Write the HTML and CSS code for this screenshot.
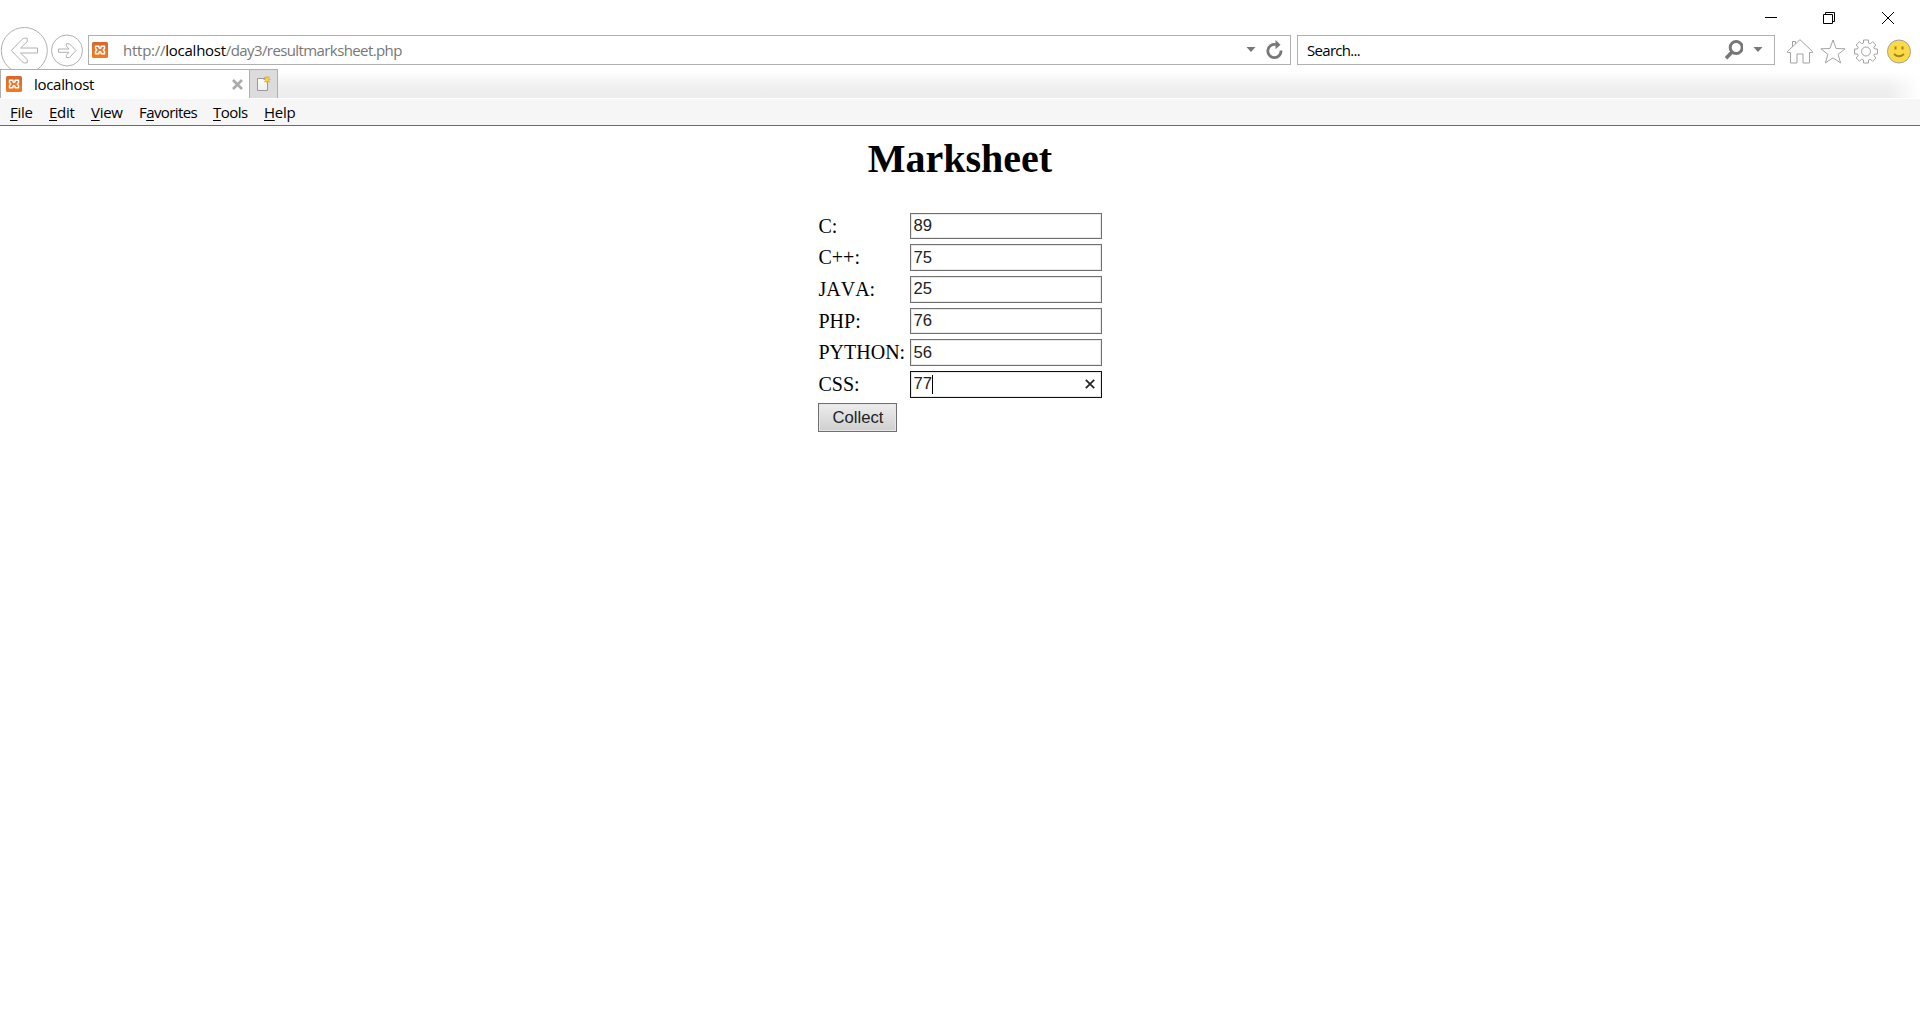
FILE: index.html
```html
<!DOCTYPE html>
<html lang="en">
<head>
<meta charset="utf-8">
<title>localhost</title>
<link rel="stylesheet" href="styles.css">
</head>
<body>
<svg class="defs" width="0" height="0">
  <defs>
    <linearGradient id="orange" x1="0" y1="0" x2="0" y2="1"><stop offset="0" stop-color="#d9662a"/><stop offset="1" stop-color="#f47b22"/></linearGradient>
    <symbol id="xampp" viewBox="0 0 16 16">
      <rect width="16" height="16" rx="1.5" fill="url(#orange)"/>
      <path d="M6.900 5.800V4.300H3.500V6.600L4.800 8L3.500 9.400V11.700H6.900V10.200M9.100 5.800V4.300H12.500V6.600L11.200 8L12.500 9.400V11.700H9.100V10.200M6.900 5.800Q8 7.200 9.100 5.800M6.900 10.200Q8 8.800 9.100 10.200" fill="none" stroke="#fff" stroke-width="1.500" stroke-linejoin="round"/>
    </symbol>
  </defs>
</svg>
<header class="chrome">
  <div class="titlebar">
    <svg width="12" height="12"><path d="M0 5.500h12" stroke="#000"/></svg>
    <svg width="12" height="12" fill="none" stroke="#000"><path d="M.5 2.500h9v9h-9zM2.500 2.500v-2h9v9h-2"/></svg>
    <svg width="12" height="12" stroke="#000"><path d="M0 0l12 12M12 0L0 12"/></svg>
  </div>
  <div class="navbar">
    <svg class="back" width="50" height="50" fill="none" stroke="#b0b0b0"><circle cx="24.300" cy="23.500" r="23"/><path d="M11.300 23.500L22 12.500q1.300-1.300 2.600-1.300h2.600v3.400L20.500 21H37.500v5H20.500l6.700 6.500v3.400h-2.600q-1.300 0-2.600-1.300Z"/></svg>
    <svg class="forward" width="34" height="34" fill="none" stroke="#b0b0b0"><circle cx="17" cy="16.500" r="15.500"/><path d="M26 16.500L19.500 9.800H16.300V12L19 15H8.500v3.300H19L16.300 21.300v2.300h3.200Z"/></svg>
    <div class="address">
      <svg class="favicon" width="16" height="16"><use href="#xampp"/></svg>
      <span class="url">http://<b>localhost</b><span class="path">/day3/resultmarksheet.php</span></span>
      <svg class="caret" width="10" height="6"><path d="M.5 0h9L5 5z" fill="#777"/></svg>
      <svg width="18" height="20" fill="none"><path d="M9.800 4.600A6.600 6.600 0 1 0 15 10.500" stroke="#777" stroke-width="2.800"/><path d="M9.500 0l5 4.700L9.500 9.200z" fill="#777"/></svg>
    </div>
    <div class="search">
      <span>Search...</span>
      <svg width="18" height="20" fill="none" stroke="#777"><circle cx="11.200" cy="7.500" r="6" stroke-width="3"/><path d="M7 12l-6 6.200" stroke-width="3.600"/></svg>
      <svg width="10" height="6"><path d="M.5 0h9L5 5z" fill="#777"/></svg>
    </div>
    <div class="tools">
      <svg width="26" height="25" fill="none" stroke="#a2a2a2"><path d="M.6 12.400L13 .7 25.400 12.400v1.100H22.500v10.500H16v-9H10v9H3.500V13.500H.6zM5.500 7.800V2.500h3v2.400"/></svg>
      <svg width="26" height="25" fill="none" stroke="#a2a2a2"><path d="M13 1l3.100 8.500 9 .3-7 5.600 2.500 8.500L13 18.900 5.400 23.900l2.500-8.500-7-5.600 9-.3z"/></svg>
      <svg width="26" height="25" fill="none" stroke="#a2a2a2"><circle cx="13" cy="12.500" r="4.500"/><path d="M10.500 4V1h5v3l1.900.8L19.500 2.700 23 6.100l-2.200 2.100.8 1.800H24.500v5h-2.900l-.8 1.800L23 18.900l-3.500 3.400-2.100-2.100-1.900.8V24h-5v-3l-1.900-.8-2.100 2.100L3 18.900l2.200-2.100L4.400 15H1.500v-5h2.900l.8-1.800L3 6.100l3.500-3.400 2.100 2.100z"/></svg>
      <svg width="26" height="25" fill="none"><circle cx="13" cy="12.500" r="11.500" fill="#fdd943" stroke="#a0a0a0"/><path d="M9.500 7.500v3M16.500 7.500v3" stroke="#9b8429" stroke-width="2"/><path d="M8 15q5 4.500 10 0" stroke="#9b8429" stroke-width="1.800"/></svg>
    </div>
  </div>
  <div class="tabs">
    <div class="tab">
      <svg class="favicon" width="16" height="16"><use href="#xampp"/></svg>
      <span>localhost</span>
      <svg width="11" height="11"><path d="M1 1l9 9M10 1L1 10" stroke="#aaa" stroke-width="2.600"/></svg>
    </div>
    <div class="newtab">
      <svg width="16" height="17"><defs><linearGradient id="page" x2="0" y2="1"><stop stop-color="#fff"/><stop offset="1" stop-color="#eee"/></linearGradient></defs><path d="M1.500 3.500h10v12h-10z" fill="url(#page)" stroke="#999"/><path d="M11 1v7M7.500 4.500h7M8.500 2l5 5M13.500 2l-5 5" stroke="#eda52d" stroke-width="1.200"/><circle cx="11" cy="4.500" r="1.800" fill="#ffd04d"/></svg>
    </div>
    <div class="tabspace"></div>
  </div>
  <nav class="menu">
    <span class="file"><u>F</u>ile</span><span class="edit"><u>E</u>dit</span><span class="view"><u>V</u>iew</span><span class="favorites">F<u>a</u>vorites</span><span class="toolsmenu"><u>T</u>ools</span><span><u>H</u>elp</span>
  </nav>
</header>
<main>
  <h1>Marksheet</h1>
  <form class="marks">
    <label>C:</label><div class="field">89</div>
    <label>C++:</label><div class="field">75</div>
    <label class="java">JAVA:</label><div class="field">25</div>
    <label>PHP:</label><div class="field">76</div>
    <label>PYTHON:</label><div class="field">56</div>
    <label>CSS:</label><div class="field focused">77<i class="cursor"></i><svg width="10" height="10"><path d="M.8.8l8.400 8.400M9.200.8L.8 9.200" stroke="#222" stroke-width="1.700"/></svg></div>
    <button type="button">Collect</button>
  </form>
</main>
</body>
</html>
```
FILE: styles.css
```css
* { box-sizing: border-box; }
body { margin: 0; background: #fff; color: #000; font: 20px "Liberation Serif", serif; overflow: hidden; }
svg { display: block; flex: none; }
.defs { position: absolute; }
.chrome { height: 126px; font: 15px/20px "Open Sans", sans-serif; border-bottom: 1px solid #6b6b6b; }
.titlebar { height: 27px; display: flex; justify-content: flex-end; gap: 46px; padding: 12px 26px 0 0; }
.titlebar svg:last-child { margin-left: 1px; }
.navbar { height: 42px; display: flex; align-items: flex-start; overflow: hidden; }
.forward { margin-top: 7px; }
.address, .search { height: 30px; margin-top: 8px; border: 1px solid #b0b0b0; display: flex; align-items: center; }
.address { width: 1203px; margin-left: 4px; padding: 0 6px 0 3px; }
.url { margin-left: 15px; flex: 1; color: #777; letter-spacing: -.25px; white-space: nowrap; }
.url b { color: #000; font-weight: 400; }
.path { letter-spacing: -.6px; }
.caret { margin-right: 10px; }
.search { width: 478px; margin-left: 6px; padding: 0 11px 0 9px; }
.search span { flex: 1; letter-spacing: -.7px; }
.search svg + svg { margin-left: 10px; }
.tools { display: flex; gap: 7px; margin: 12px 0 0 12px; }
.tabs { height: 30px; display: flex; border-bottom: 1px solid #fff; }
.tab { width: 249px; border: 1px solid #b0b0b0; border-width: 1px 0 0 1px; display: flex; align-items: center; padding: 0 6px 0 5px; }
.tab span { flex: 1; margin-left: 12px; letter-spacing: -.3px; }
.newtab { width: 29px; background: #dcdcdc; border: 1px solid #b0b0b0; border-bottom: 0; padding: 5px 6px; }
.tabspace { flex: 1; background: linear-gradient(to right, transparent 98%, #fff), linear-gradient(#fff 10%, #f0f0f0 60%, #ececec); }
.menu { height: 26px; background: #f6f6f6; display: flex; align-items: center; padding-left: 10px; letter-spacing: -.3px; }
.menu u { text-underline-offset: 2px; text-decoration-thickness: 1px; }
.file { width: 39px; }
.edit { width: 42px; }
.view { width: 48px; }
.favorites { width: 74px; letter-spacing: -.6px; }
.toolsmenu { width: 51px; letter-spacing: -.5px; }
h1 { margin: 10px 0 0; text-align: center; font-size: 40px; line-height: 46px; }
.marks { width: 284px; margin: 30.7px auto 0; display: grid; grid-template-columns: 92px 192px; grid-auto-rows: 31.65px; }
.marks label { line-height: 26px; padding-left: .5px; }
.marks .java { font-kerning: none; }
.field { height: 26.65px; border: 1px solid #707070; box-shadow: inset 0 0 0 1px #e8e8e8; padding: 0 6px 0 2.500px; display: flex; align-items: center; font: 16.67px "Liberation Sans", sans-serif; color: #222; }
.focused { border-color: #111; }
.cursor { width: 1px; height: 19px; background: #000; }
.focused svg { margin-left: auto; }
.marks button { width: 79px; height: 29px; padding: 1px 0 0 1px; border: 1px solid #707070; background: linear-gradient(#ededed, #cfcfcf); box-shadow: inset 0 0 0 1px #e6e6e6; font: 16.67px "Liberation Sans", sans-serif; color: #222; }
```
